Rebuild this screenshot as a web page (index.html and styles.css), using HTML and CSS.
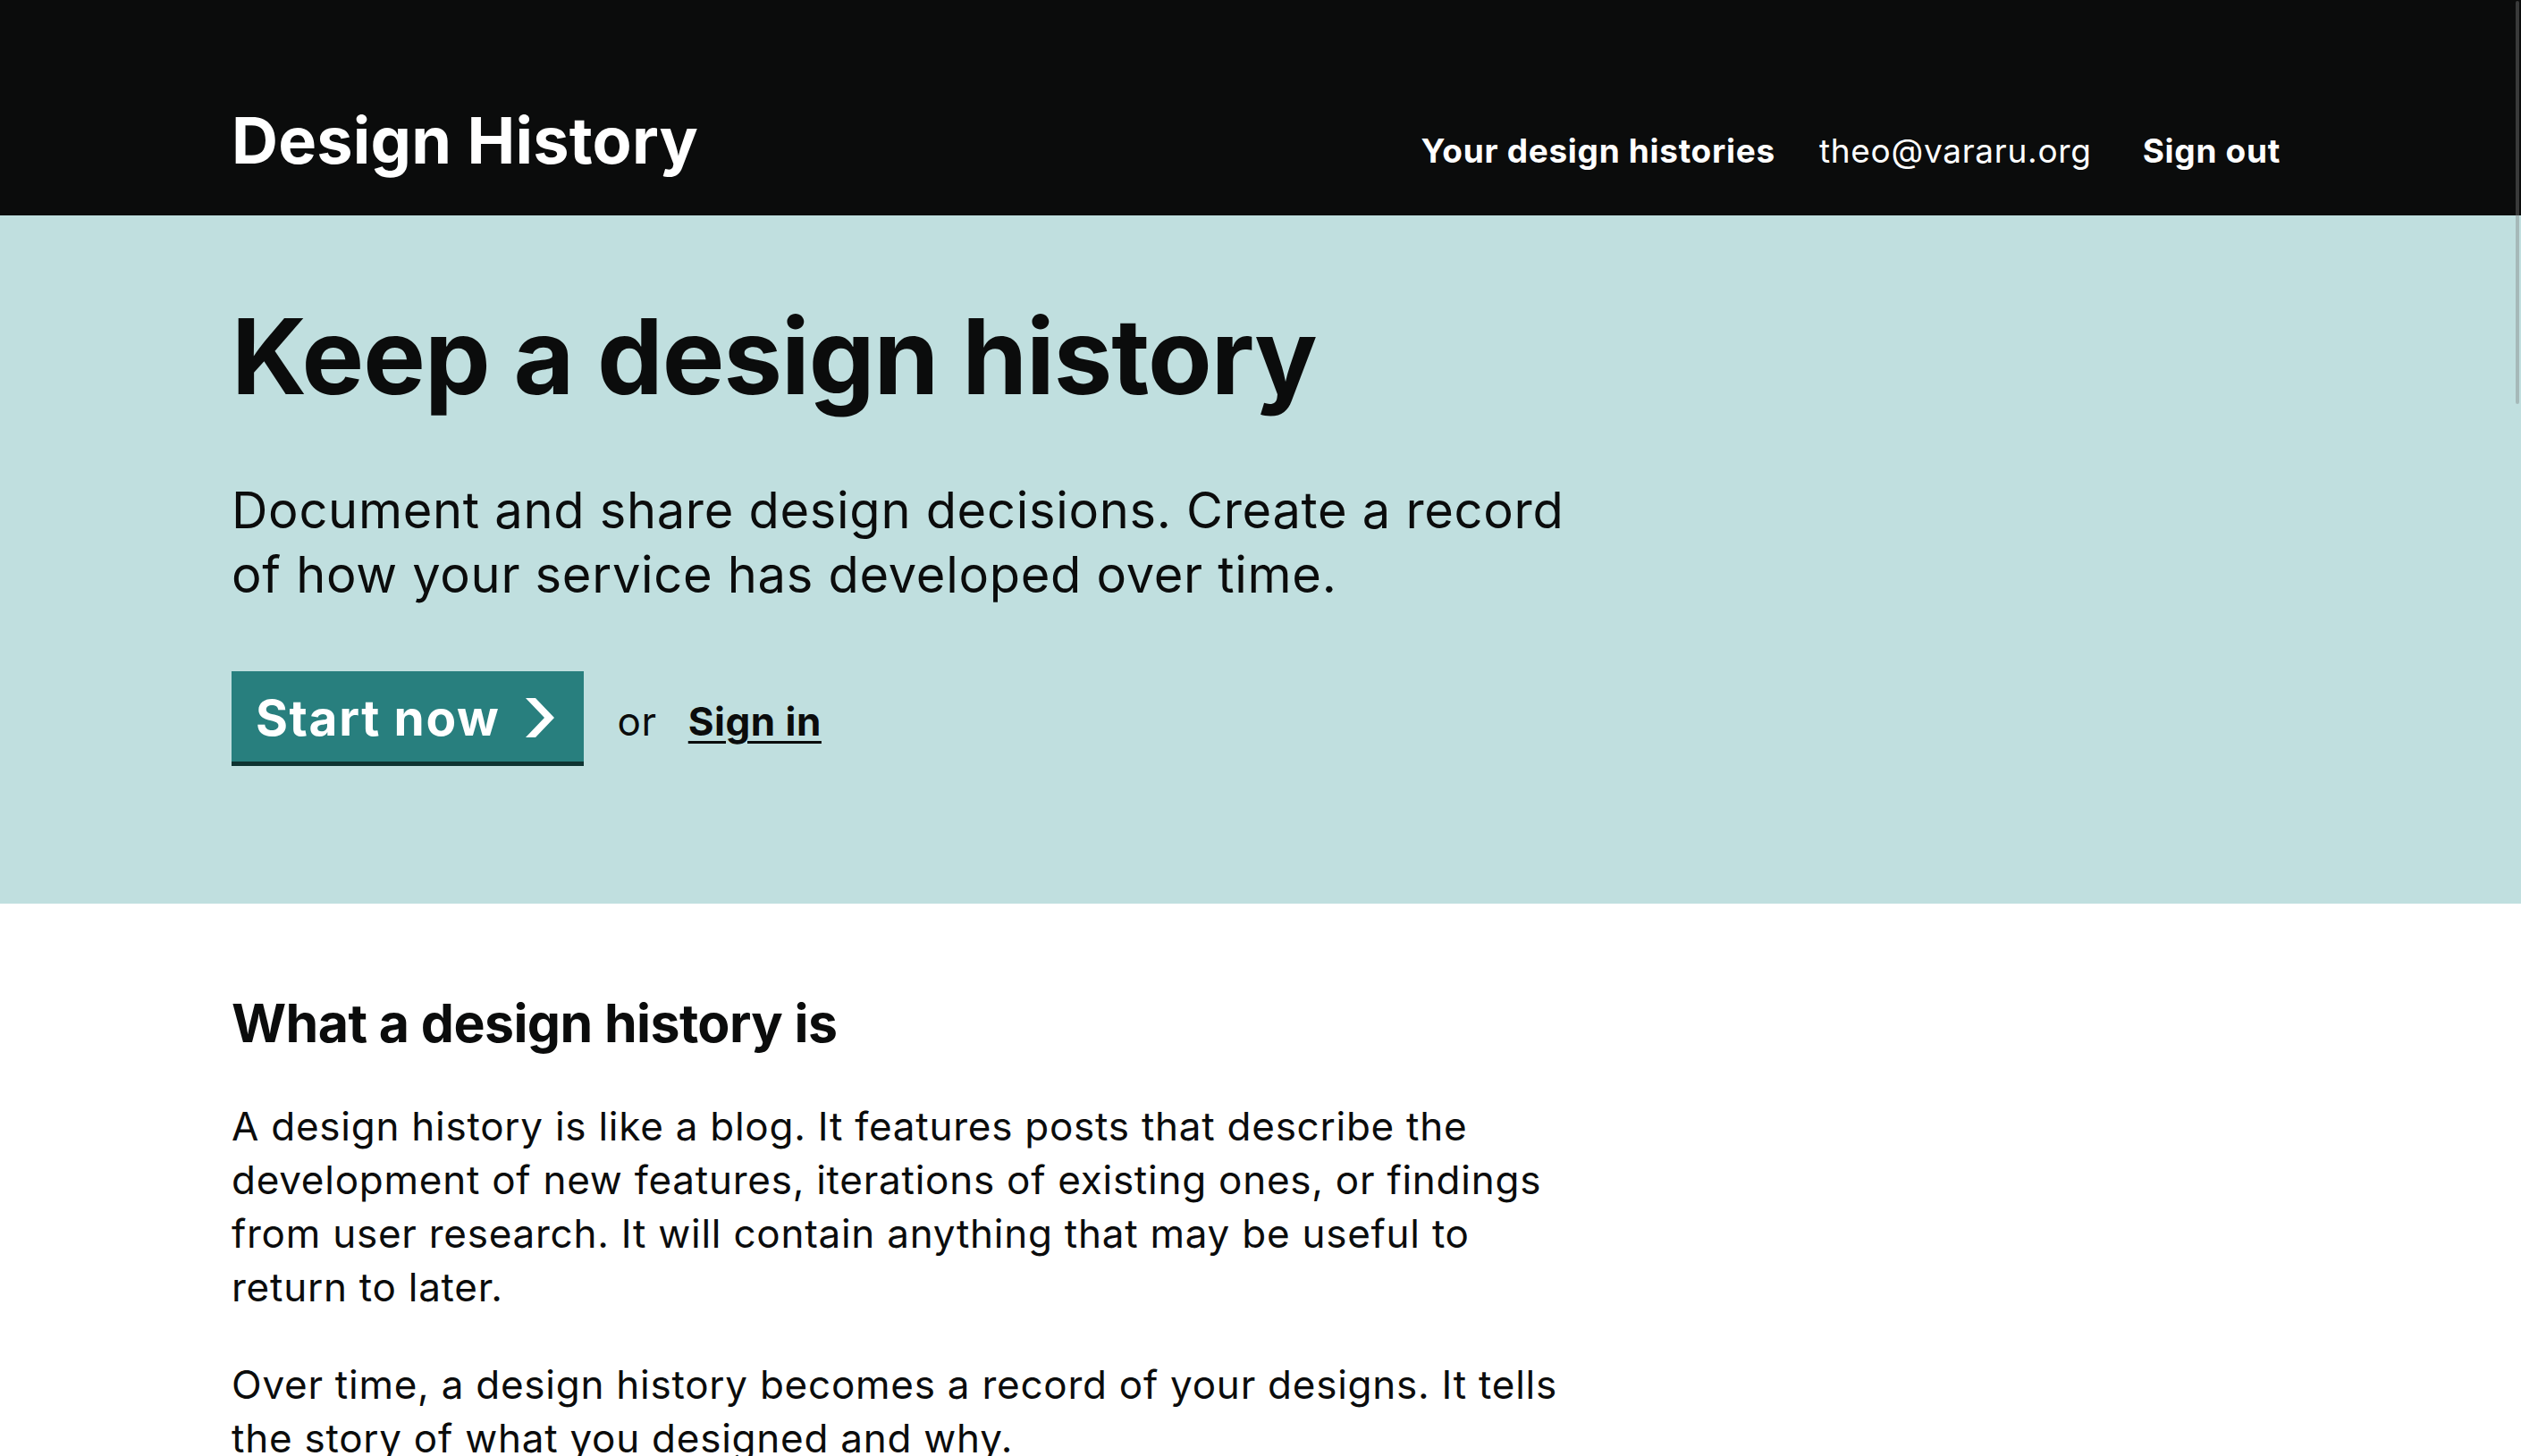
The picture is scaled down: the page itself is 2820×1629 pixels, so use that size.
FILE: index.html
```html
<!DOCTYPE html>
<html lang="en">
<head>
<meta charset="utf-8">
<title>Design History</title>
<link rel="stylesheet" href="styles.css">
</head>
<body>
<header class="site-header">
  <div class="container header-inner">
    <a class="logo" href="#">Design History</a>
    <nav class="nav">
      <a class="nav-link nav-strong" href="#">Your design histories</a>
      <span class="nav-link nav-email">theo@vararu.org</span>
      <a class="nav-link nav-strong nav-last" href="#">Sign out</a>
    </nav>
  </div>
</header>
<main>
  <section class="hero">
    <div class="container">
      <h1 class="hero-title">Keep a design history</h1>
      <p class="hero-lead">Document and share design decisions. Create a record of how your service has developed over time.</p>
      <div class="hero-actions">
        <a class="start-button" href="#">Start now
          <svg class="chevron" viewBox="0 0 36 44" aria-hidden="true"><path d="M2 0 H13 L34 22 L13 44 H2 L23 22 Z" fill="#fff"/></svg>
        </a>
        <span class="or">or</span>
        <a class="signin" href="#">Sign in</a>
      </div>
    </div>
  </section>
  <section class="content">
    <div class="container">
      <h2 class="section-title">What a design history is</h2>
      <p class="body-text">A design history is like a blog. It features posts that describe the development of new features, iterations of existing ones, or findings from user research. It will contain anything that may be useful to return to later.</p>
      <p class="body-text">Over time, a design history becomes a record of your designs. It tells the story of what you designed and why.</p>
    </div>
  </section>
</main>
<div class="scroll-thumb"></div>
</body>
</html>
```
FILE: styles.css
```css
* { box-sizing: border-box; }
html, body { margin: 0; padding: 0; }
body {
  font-family: Inter, "Noto Sans", "Liberation Sans", sans-serif;
  color: #0b0c0c;
  background: #ffffff;
  overflow: hidden;
}
.container {
  width: 2302px;
  margin: 0 auto;
}
.site-header {
  background: #0b0c0c;
  height: 241px;
}
.header-inner {
  display: flex;
  justify-content: space-between;
  align-items: flex-start;
  padding-top: 106px;
}
.logo {
  margin-top: 8px;
  font-size: 72px;
  line-height: 1.2;
  font-weight: 700;
  color: #ffffff;
  text-decoration: none;
  letter-spacing: 0.2px;
}
.nav {
  display: flex;
  padding-top: 41px;
  padding-right: 10px;
}
.nav-link {
  font-size: 37px;
  line-height: 1.2;
  color: #ffffff;
  text-decoration: none;
  font-weight: 400;
  letter-spacing: 0.7px;
}
.nav-strong { font-weight: 700; }
.nav-email { margin-left: 49px; }
.nav-last { margin-left: 57px; }

.hero {
  background: #c0dfdf;
  height: 770px;
  padding-top: 88px;
}
.hero-title {
  margin: 0;
  font-size: 117px;
  line-height: 1.2;
  font-weight: 700;
  letter-spacing: -1px;
}
.hero-lead {
  margin: 66px 0 0;
  max-width: 1516px;
  font-size: 56px;
  line-height: 72px;
  font-weight: 400;
  letter-spacing: 0.7px;
}
.hero-actions {
  margin-top: 72px;
  display: flex;
  align-items: baseline;
}
.start-button {
  display: inline-flex;
  align-items: center;
  gap: 27px;
  background: #287f7e;
  color: #ffffff;
  font-size: 55px;
  line-height: 66px;
  font-weight: 700;
  letter-spacing: 1.6px;
  text-decoration: none;
  padding: 19px 31px 16px 27px;
  box-shadow: 0 5px 0 #0f3331;
}
.chevron {
  width: 36px;
  height: 44px;
  display: block;
}
.or {
  margin-left: 37px;
  font-size: 44px;
  line-height: 60px;
  letter-spacing: 0.7px;
}
.signin {
  margin-left: 35px;
  font-size: 44px;
  line-height: 60px;
  font-weight: 700;
  letter-spacing: 0.5px;
  color: #0b0c0c;
  text-decoration: underline;
  text-decoration-thickness: 3px;
  text-underline-offset: 6px;
}

.content {
  padding-top: 97px;
}
.section-title {
  margin: 0;
  font-size: 59px;
  line-height: 1.25;
  font-weight: 700;
  letter-spacing: -0.6px;
}
.body-text {
  margin: 48px 0 0;
  max-width: 1516px;
  font-size: 44px;
  line-height: 60px;
  letter-spacing: 0.75px;
}
.body-text + .body-text { margin-top: 49px; }

.scroll-thumb {
  position: fixed;
  top: 1px;
  right: 2px;
  width: 4px;
  height: 451px;
  border-radius: 2px;
  background: rgba(128, 128, 128, 0.4);
}
```
